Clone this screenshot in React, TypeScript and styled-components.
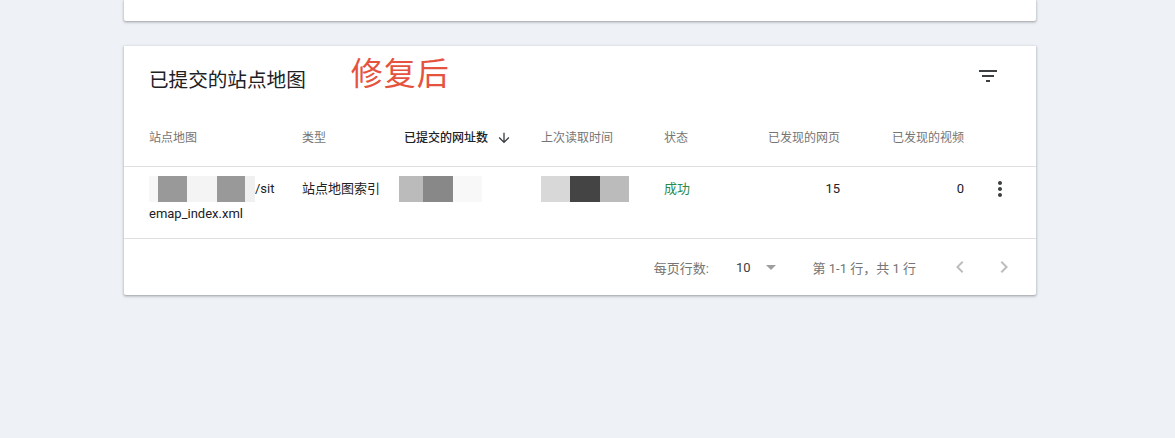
import React from "react";
import styled, { createGlobalStyle } from "styled-components";

const GlobalStyle = createGlobalStyle`
  html, body {
    margin: 0;
    padding: 0;
    background: #eef1f6;
    font-family: Roboto, "Noto Sans CJK SC", "Noto Sans", sans-serif;
    color: #202124;
  }
`;

const Page = styled.div`
  display: flex;
  flex-direction: column;
  gap: 25px;
  padding-left: 124px;
  width: 912px;
  min-height: 438px;
`;

const Card = styled.section<{ $height?: number }>`
  background: #fff;
  border-radius: 0 0 2px 2px;
  box-shadow: 0 1px 2px rgba(60, 64, 67, 0.3), 0 1px 3px 1px rgba(60, 64, 67, 0.15);
  ${(p) => (p.$height ? `height: ${p.$height}px;` : "")}
`;

const TitleBar = styled.div`
  display: flex;
  align-items: center;
  height: 64px;
  padding: 0 36px 0 25px;
`;

const Title = styled.h2`
  margin: 0;
  font-size: 19.6px;
  font-weight: 400;
  color: #202124;
  margin-top: 1px;
`;

const Stamp = styled.span`
  margin-left: 45px;
  margin-top: -14px;
  font-size: 32px;
  color: #e5533f;
  letter-spacing: 1px;
`;

const IconButton = styled.button`
  margin-left: auto;
  width: 24px;
  height: 24px;
  padding: 0;
  border: none;
  background: none;
  display: flex;
  align-items: center;
  justify-content: center;
  color: #3c4043;
  margin-top: -4px;
`;

const Row = styled.div<{ $head?: boolean }>`
  display: grid;
  grid-template-columns: 153px 102px 137px 123px 76px 100px 124px 72px;
  padding-left: 25px;
  border-bottom: 1px solid #e0e0e0;
  align-items: ${(p) => (p.$head ? "center" : "start")};
  height: ${(p) => (p.$head ? "57px" : "72px")};
  padding-top: ${(p) => (p.$head ? "0" : "10px")};
  box-sizing: border-box;
  font-size: ${(p) => (p.$head ? "12px" : "13px")};
  line-height: 24px;
`;

const Head = styled.div<{ $active?: boolean; $right?: boolean }>`
  color: ${(p) => (p.$active ? "#202124" : "#757575")};
  font-weight: ${(p) => (p.$active ? 500 : 400)};
  display: flex;
  align-items: center;
  justify-content: ${(p) => (p.$right ? "flex-end" : "flex-start")};
  gap: 8px;
`;

const Cell = styled.div<{ $right?: boolean; $tone?: string; $shift?: number }>`
  color: ${(p) => p.$tone || "#202124"};
  text-align: ${(p) => (p.$right ? "right" : "left")};
  padding-right: ${(p) => (p.$right ? "0" : "22px")};
  margin-left: ${(p) => p.$shift || 0}px;
  word-break: break-all;
`;

const Blur = styled.span`
  display: inline-flex;
  vertical-align: middle;
  height: 26px;
  margin-top: -2px;
`;

const Seg = styled.span<{ $w: number; $c: string }>`
  width: ${(p) => p.$w}px;
  background: ${(p) => p.$c};
  filter: blur(0.4px);
`;

const MoreCell = styled.div`
  display: flex;
  justify-content: center;
  color: #3c4043;
`;

const Footer = styled.div`
  display: flex;
  align-items: center;
  height: 56px;
  padding-right: 20px;
  justify-content: flex-end;
  font-size: 13px;
  color: #757575;
`;

const PerPage = styled.span`
  margin-right: 27px;
`;

const Select = styled.span`
  display: flex;
  align-items: center;
  gap: 15px;
  color: #3c4043;
  font-size: 13px;
  margin-right: 37px;
`;

const Range = styled.span`
  margin-right: 32px;
`;

const Pager = styled.div`
  display: flex;
  gap: 20px;
  color: #bdbdbd;
`;

type Piece = [number, string];

function Redacted({ pieces }: { pieces: Piece[] }) {
  return (
    <Blur>
      {pieces.map(([w, c], i) => (
        <Seg key={i} $w={w} $c={c} />
      ))}
    </Blur>
  );
}

const FilterIcon = () => (
  <svg width="24" height="24" viewBox="0 0 24 24" fill="currentColor">
    <path d="M10 18h4v-2h-4v2zM3 6v2h18V6H3zm3 7h12v-2H6v2z" />
  </svg>
);

const ArrowDown = () => (
  <svg width="16" height="16" viewBox="0 0 24 24" fill="#3c4043">
    <path d="M20 12l-1.41-1.41L13 16.17V4h-2v12.17l-5.58-5.59L4 12l8 8 8-8z" />
  </svg>
);

const MoreVert = () => (
  <svg width="24" height="24" viewBox="0 0 24 24" fill="currentColor">
    <path d="M12 8c1.1 0 2-.9 2-2s-.9-2-2-2-2 .9-2 2 .9 2 2 2zm0 2c-1.1 0-2 .9-2 2s.9 2 2 2 2-.9 2-2-.9-2-2-2zm0 6c-1.1 0-2 .9-2 2s.9 2 2 2 2-.9 2-2-.9-2-2-2z" />
  </svg>
);

const Caret = () => (
  <svg width="10" height="5" viewBox="0 0 10 5" fill="#9e9e9e">
    <path d="M0 0l5 5 5-5z" />
  </svg>
);

const Chevron = ({ dir }: { dir: "left" | "right" }) => (
  <svg width="24" height="24" viewBox="0 0 24 24" fill="currentColor">
    {dir === "left" ? (
      <path d="M15.41 7.41L14 6l-6 6 6 6 1.41-1.41L10.83 12z" />
    ) : (
      <path d="M10 6L8.59 7.41 13.17 12l-4.58 4.59L10 18l6-6z" />
    )}
  </svg>
);

export default function App() {
  return (
    <>
      <GlobalStyle />
      <Page>
        <Card $height={21} />
        <Card>
          <TitleBar>
            <Title>已提交的站点地图</Title>
            <Stamp>修复后</Stamp>
            <IconButton>
              <FilterIcon />
            </IconButton>
          </TitleBar>

          <Row $head>
            <Head>站点地图</Head>
            <Head>类型</Head>
            <Head $active>
              已提交的网址数
              <ArrowDown />
            </Head>
            <Head>上次读取时间</Head>
            <Head>状态</Head>
            <Head $right>已发现的网页</Head>
            <Head $right>已发现的视频</Head>
            <Head />
          </Row>

          <Row>
            <Cell>
              <Redacted
                pieces={[
                  [9, "#f7f7f7"],
                  [29, "#999999"],
                  [30, "#f4f4f4"],
                  [28, "#999999"],
                  [10, "#f0f0f0"],
                ]}
              />
              /sitemap_index.xml
            </Cell>
            <Cell>站点地图索引</Cell>
            <Cell $shift={-5}>
              <Redacted
                pieces={[
                  [24, "#bbbbbb"],
                  [30, "#888888"],
                  [29, "#f8f8f8"],
                ]}
              />
            </Cell>
            <Cell>
              <Redacted
                pieces={[
                  [29, "#d8d8d8"],
                  [30, "#444444"],
                  [29, "#bbbbbb"],
                ]}
              />
            </Cell>
            <Cell $tone="#2b8a4e">成功</Cell>
            <Cell $right>15</Cell>
            <Cell $right>0</Cell>
            <MoreCell>
              <MoreVert />
            </MoreCell>
          </Row>

          <Footer>
            <PerPage>每页行数:</PerPage>
            <Select>
              10
              <Caret />
            </Select>
            <Range>第 1-1 行，共 1 行</Range>
            <Pager>
              <Chevron dir="left" />
              <Chevron dir="right" />
            </Pager>
          </Footer>
        </Card>
      </Page>
    </>
  );
}
